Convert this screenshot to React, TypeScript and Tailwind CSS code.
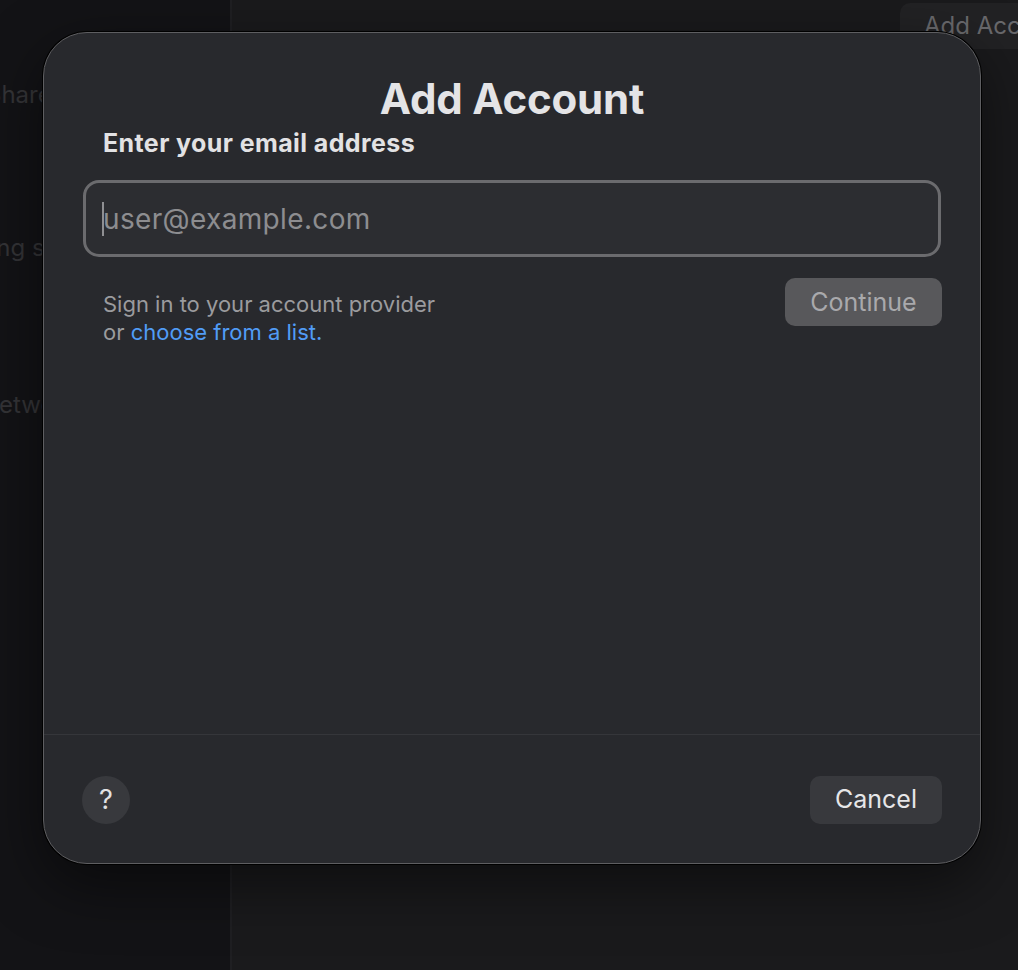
import React from "react";

const font = { fontFamily: "Inter, 'Noto Sans', 'Liberation Sans', sans-serif" };

function Sidebar() {
  return (
    <aside className="w-[232px] shrink-0 h-full bg-[#131316] border-r-2 border-[#1f1f22] overflow-hidden relative">
      <div className="pt-[78px] text-[24px] leading-[34px] text-[#343437] whitespace-nowrap">
        <div className="ml-[-14px]">Shared Albums</div>
        <div className="ml-[-62px] mt-[119px]">Sharing settings</div>
        <div className="ml-[-19px] mt-[123px]">Network</div>
      </div>
    </aside>
  );
}

function Main() {
  return (
    <main className="flex-1 h-full bg-[#1a1a1c] overflow-hidden">
      <div className="flex justify-start pl-[668px] pt-[3px]">
        <div className="h-[46px] rounded-[10px] bg-[#222224] pl-[24px] pr-[24px] flex items-center text-[24px] text-[#69696c] whitespace-nowrap">
          Add Account
        </div>
      </div>
    </main>
  );
}

function Dialog() {
  return (
    <div className="absolute left-[43px] top-[32px] w-[938px] h-[832px] rounded-[44px] bg-[#28292d] border border-[#5e5e61] shadow-[0_0_0_1px_#000,0_20px_60px_rgba(0,0,0,0.5)] flex flex-col overflow-hidden">
      <div className="flex-1 px-[39px] pt-[41px]">
        <h1 className="text-center text-[42px] leading-[50px] font-bold text-[#e4e4e6] tracking-[-0.2px]">
          Add Account
        </h1>
        <div className="pl-[20px] mt-[4px] text-[25px] leading-[30px] font-bold text-[#e2e2e4] tracking-[0.4px]">
          Enter your email address
        </div>
        <div className="mt-[22px] h-[77px] rounded-[16px] border-[3px] border-[#6b6b6e] bg-[#2c2d31] flex items-center pl-[16px] relative">
          <span className="w-[2px] h-[34px] bg-[#8f8f92] mr-[-1px]" />
          <span className="text-[28px] text-[#8d8d90] tracking-[0.35px]">user@example.com</span>
        </div>
        <div className="mt-[21px] flex items-start justify-between">
          <div className="pl-[20px] pt-[12px] text-[22px] leading-[28px] text-[#9b9b9e]">
            <div>Sign in to your account provider</div>
            <div>
              or <span className="text-[#519cf6]">choose from a list.</span>
            </div>
          </div>
          <button className="w-[157px] h-[48px] mr-[-1px] rounded-[10px] bg-[#58585b] text-[25px] text-[#a9a9ac] pt-[1px]">
            Continue
          </button>
        </div>
      </div>
      <div className="h-px bg-[#35363a]" />
      <div className="h-[128px] flex items-center justify-between pl-[38px] pr-[38px] pt-[2px]">
        <button className="w-[48px] h-[48px] rounded-full bg-[#38393d] text-[27px] text-[#e2e2e4] flex items-center justify-center">
          ?
        </button>
        <button className="w-[132px] h-[48px] rounded-[10px] bg-[#38393d] text-[25px] text-[#e6e6e8]">
          Cancel
        </button>
      </div>
    </div>
  );
}

export default function App() {
  return (
    <div className="w-[1018px] h-[970px] relative flex overflow-hidden bg-[#1a1a1c]" style={font}>
      <Sidebar />
      <Main />
      <Dialog />
    </div>
  );
}
